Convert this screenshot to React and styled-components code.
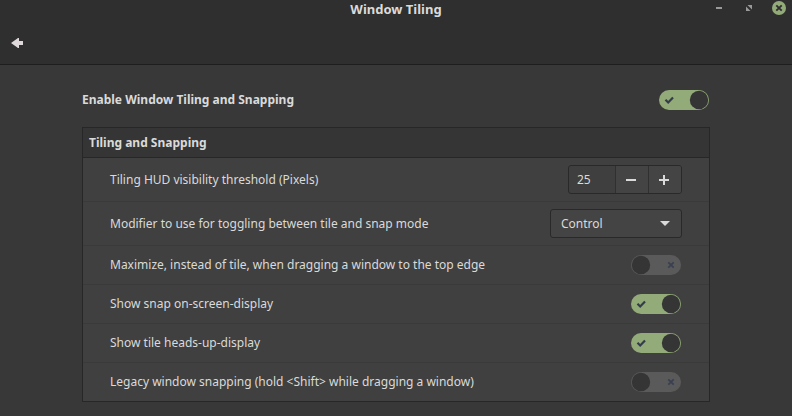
import React, { useState } from "react";
import styled, { createGlobalStyle } from "styled-components";

const GlobalStyle = createGlobalStyle`
  * { box-sizing: border-box; }
  html { background: #383838; }
  body {
    margin: 0;
    background: #383838;
    color: #dadada;
    font: 12px/18px "Noto Sans", sans-serif;
  }
  button, input, select { font: inherit; color: inherit; }
`;

const Header = styled.header`
  background: #2f2f2f;
  border-bottom: 1px solid #1e1e1e;
`;

const TitleBar = styled.div`
  display: grid;
  grid-template-columns: 1fr auto 1fr;
  align-items: start;
  height: 20px;
  padding: 0 6px;
`;

const Title = styled.h1`
  grid-column: 2;
  margin: 0;
  font-size: 13px;
  line-height: 18px;
  font-weight: 700;
`;

const WindowControls = styled.div`
  display: flex;
  justify-content: flex-end;
  gap: 16px;
  padding-top: 1px;
`;

const IconButton = styled.button`
  display: grid;
  place-items: center;
  width: ${(p) => p.$size}px;
  height: ${(p) => p.$size}px;
  padding: 0;
  border: 0;
  background: none;
  color: ${(p) => p.$color || "#9a9a9a"};
  svg { display: block; }
`;

const Toolbar = styled.nav`
  display: flex;
  align-items: center;
  height: 44px;
  padding: 2px 8px 0;
`;

const Content = styled.main`
  padding: 20px 82px 14px;
`;

const EnableRow = styled.div`
  display: flex;
  align-items: center;
  justify-content: space-between;
  height: 30px;
  margin-bottom: 12px;
  font-weight: 700;
`;

const Panel = styled.section`
  border: 1px solid #272727;
  background: #404040;
`;

const PanelTitle = styled.h2`
  margin: 0;
  padding: 6px;
  border-bottom: 1px solid #272727;
  background: #353535;
  font-size: 12px;
  line-height: 17px;
  font-weight: 700;
`;

const Row = styled.div`
  display: flex;
  align-items: center;
  justify-content: space-between;
  min-height: ${(p) => (p.$tall ? 44 : 39)}px;
  padding: 0 27px;
  border-bottom: 1px solid #3a3a3a;
  &:last-child { border-bottom: 0; min-height: 38px; }
`;

const SpinBox = styled.div`
  display: flex;
  height: 29px;
  border: 1px solid #292929;
  border-radius: 3px;
  background: #3f3f3f;
  overflow: hidden;
`;

const SpinInput = styled.input`
  width: 46px;
  padding: 0 8px;
  border: 0;
  outline: 0;
  background: transparent;
`;

const StepButton = styled.button`
  display: grid;
  place-items: center;
  width: 33px;
  padding: 0 2px 0 0;
  border: 0;
  border-left: 1px solid #303030;
  background: #444444;
`;

const SelectBox = styled.div`
  display: grid;
  align-items: center;
  width: 132px;
  > * { grid-area: 1 / 1; }
  > svg { justify-self: end; margin-right: 12px; pointer-events: none; }
`;

const Select = styled.select`
  appearance: none;
  width: 100%;
  height: 29px;
  padding: 0 30px 0 10px;
  border: 1px solid #292929;
  border-radius: 3px;
  outline: 0;
  background: #444444;
`;

const SwitchBox = styled.span`
  display: grid;
  width: 50px;
  height: 20px;
  margin-right: 1px;
  > * { grid-area: 1 / 1; }
  > svg { pointer-events: none; }
`;

const SwitchInput = styled.input`
  appearance: none;
  width: 50px;
  height: 20px;
  margin: 0;
  border-radius: 10px;
  background: #5a5a5a;
  &:checked { background: #92ab78; }
`;

function Switch({ id, initial }) {
  const [on, setOn] = useState(initial);
  return (
    <SwitchBox>
      <SwitchInput
        id={id}
        type="checkbox"
        role="switch"
        checked={on}
        onChange={(e) => setOn(e.target.checked)}
      />
      <svg width="50" height="20" viewBox="0 0 50 20" aria-hidden="true">
        <circle cx={on ? 40 : 10} cy="10" r="9.2" fill="#353535" />
        {on ? (
          <path d="M6.5 9.8 9.2 12.5 14 7.5" fill="none" stroke="#343b4b" strokeWidth="2.2" />
        ) : (
          <path d="M37.3 7.3 42.7 12.7M42.7 7.3 37.3 12.7" fill="none" stroke="#3a4052" strokeWidth="1.8" />
        )}
      </svg>
    </SwitchBox>
  );
}

const toggles = [
  { id: "maximize", text: "Maximize, instead of tile, when dragging a window to the top edge", on: false },
  { id: "snap-osd", text: "Show snap on-screen-display", on: true },
  { id: "tile-hud", text: "Show tile heads-up-display", on: true },
  { id: "legacy", text: "Legacy window snapping (hold <Shift> while dragging a window)", on: false },
];

export default function App() {
  const [threshold, setThreshold] = useState(25);
  return (
    <>
      <GlobalStyle />
      <Header>
        <TitleBar>
          <Title>Window Tiling</Title>
          <WindowControls>
            <IconButton $size={14} aria-label="Minimize">
              <svg width="14" height="14" viewBox="0 0 14 14">
                <path d="M4 6h6v2H4z" fill="currentColor" />
              </svg>
            </IconButton>
            <IconButton $size={14} aria-label="Maximize">
              <svg width="14" height="14" viewBox="0 0 14 14">
                <path d="M5.5 4H10v4.5zM4 5.5V10h4.5z" fill="currentColor" />
              </svg>
            </IconButton>
            <IconButton $size={14} aria-label="Close">
              <svg width="14" height="14" viewBox="0 0 14 14">
                <circle cx="7" cy="7" r="7" fill="#92ab78" />
                <path d="M4.3 4.3 9.7 9.7M9.7 4.3 4.3 9.7" stroke="#2f2f2f" strokeWidth="1.9" />
              </svg>
            </IconButton>
          </WindowControls>
        </TitleBar>
        <Toolbar>
          <IconButton $size={18} $color="#dfd8da" aria-label="Back">
            <svg width="18" height="18" viewBox="0 0 18 18">
              <path d="M3 9 10 4h1v3h4v4h-4v3h-1z" fill="currentColor" />
            </svg>
          </IconButton>
        </Toolbar>
      </Header>
      <Content>
        <EnableRow>
          <label htmlFor="enable">Enable Window Tiling and Snapping</label>
          <Switch id="enable" initial />
        </EnableRow>
        <Panel>
          <PanelTitle>Tiling and Snapping</PanelTitle>
          <Row $tall>
            <label htmlFor="threshold">Tiling HUD visibility threshold (Pixels)</label>
            <SpinBox>
              <SpinInput
                id="threshold"
                inputMode="numeric"
                value={threshold}
                onChange={(e) => setThreshold(Number(e.target.value) || 0)}
              />
              <StepButton aria-label="Decrease" onClick={() => setThreshold(threshold - 1)}>
                <svg width="12" height="12" viewBox="0 0 12 12">
                  <path d="M1 5h10v2H1z" fill="currentColor" />
                </svg>
              </StepButton>
              <StepButton aria-label="Increase" onClick={() => setThreshold(threshold + 1)}>
                <svg width="12" height="12" viewBox="0 0 12 12">
                  <path d="M1 5h4V1h2v4h4v2H7v4H5V7H1z" fill="currentColor" />
                </svg>
              </StepButton>
            </SpinBox>
          </Row>
          <Row $tall>
            <label htmlFor="modifier">Modifier to use for toggling between tile and snap mode</label>
            <SelectBox>
              <Select id="modifier" defaultValue="Control">
                <option>Control</option>
              </Select>
              <svg width="10" height="5" viewBox="0 0 10 5" aria-hidden="true">
                <path d="M0 0h10L5 5z" fill="currentColor" />
              </svg>
            </SelectBox>
          </Row>
          {toggles.map((t) => (
            <Row key={t.id}>
              <label htmlFor={t.id}>{t.text}</label>
              <Switch id={t.id} initial={t.on} />
            </Row>
          ))}
        </Panel>
      </Content>
    </>
  );
}
